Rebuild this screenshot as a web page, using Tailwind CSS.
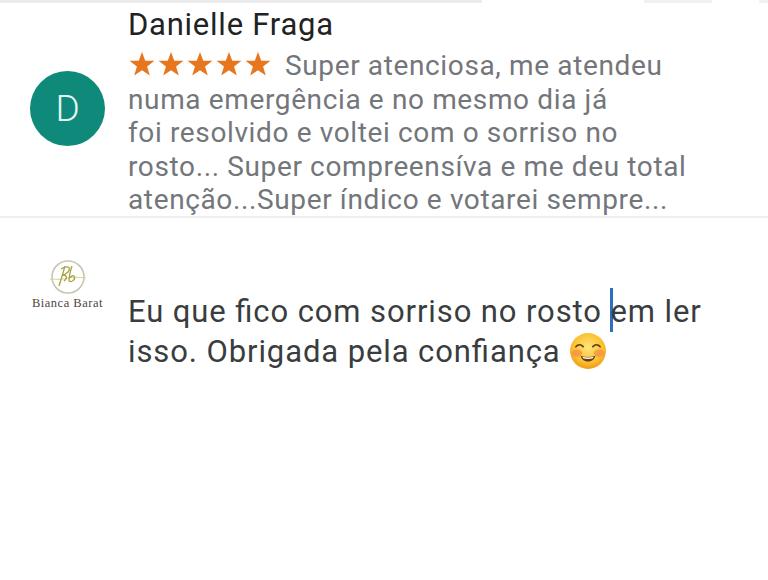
<!DOCTYPE html>
<html lang="pt-BR">
<head>
  <meta charset="UTF-8" />
  <title>Avaliação</title>
  <script src="https://cdn.jsdelivr.net/npm/@tailwindcss/browser@4"></script>
</head>
<body class="bg-white w-[768px] h-[580px] overflow-hidden font-['Roboto',sans-serif]">

  <!-- Top edge of the previous card -->
  <div class="flex h-[3px]">
    <div class="w-[482px] bg-[#ececec]"></div>
    <div class="w-[162px]"></div>
    <div class="w-[68px] bg-[#f1f1f1]"></div>
    <div class="w-[47px]"></div>
    <div class="flex-1 bg-[#f1f1f1]"></div>
  </div>

  <!-- Review -->
  <div class="flex h-[215px] border-b-2 border-[#efefef]">
    <div class="w-[128px] shrink-0 pl-[30px] pt-[68px]">
      <div class="w-[75px] h-[75px] rounded-full bg-[#0f8a7a] text-[#e6f6f3] flex items-center justify-center text-[37px] font-light">D</div>
    </div>
    <div class="flex-1">
      <h2 class="text-[31px] leading-[44px] tracking-[0.75px] text-[#222] font-normal">Danielle Fraga</h2>
      <p class="text-[28px] leading-[33.5px] text-[#73767a] mt-[2px] tracking-[0.63px]">
        <span class="inline-flex gap-[1px] align-[-2px] mr-[13px]">
          <svg class="w-[28px] h-[26px]" viewBox="0 0 24 24" fill="#e8761f"><path d="M12 1l3 8h8.500l-6.800 5.200 2.500 8.500L12 17.700l-7.200 5 2.500-8.500L.5 9H9z"/></svg>
          <svg class="w-[28px] h-[26px]" viewBox="0 0 24 24" fill="#e8761f"><path d="M12 1l3 8h8.500l-6.800 5.200 2.500 8.500L12 17.700l-7.200 5 2.500-8.500L.5 9H9z"/></svg>
          <svg class="w-[28px] h-[26px]" viewBox="0 0 24 24" fill="#e8761f"><path d="M12 1l3 8h8.500l-6.800 5.200 2.500 8.500L12 17.700l-7.200 5 2.500-8.500L.5 9H9z"/></svg>
          <svg class="w-[28px] h-[26px]" viewBox="0 0 24 24" fill="#e8761f"><path d="M12 1l3 8h8.500l-6.800 5.200 2.500 8.500L12 17.700l-7.200 5 2.500-8.500L.5 9H9z"/></svg>
          <svg class="w-[28px] h-[26px]" viewBox="0 0 24 24" fill="#e8761f"><path d="M12 1l3 8h8.500l-6.800 5.200 2.500 8.500L12 17.700l-7.200 5 2.500-8.500L.5 9H9z"/></svg>
        </span>Super atenciosa, me atendeu<br>numa emergência e no mesmo dia já<br>foi resolvido e voltei com o sorriso no<br>rosto... Super compreensíva e me deu total<br>atenção...Super índico e votarei sempre...
      </p>
    </div>
  </div>

  <!-- Reply -->
  <div class="flex">
    <div class="w-[128px] shrink-0 pl-[32px] pt-[40px]">
      <div class="w-[72px] flex flex-col items-center">
        <svg class="w-[40px] h-[38px]" viewBox="0 0 40 38" fill="none">
          <circle cx="20" cy="19" r="16" stroke="#c9c4b4" stroke-width="1.600"/>
          <path d="M2 21c8 1 13 0 18-1s11-1 18 0" stroke="#d8d68c" stroke-width="1"/>
          <path d="M17 8c-2 7-4 14-6 20M13 11c6-4 11-2 7 3-2 2-4 3-6 3 5 0 6 3 2 6M24 8c-2 6-3 11-3 15 3 2 7-2 5-5-1-1-3 0-4 2" stroke="#a9a24a" stroke-width="1.300"/>
        </svg>
        <span class="font-['Liberation_Serif',serif] text-[12.500px] leading-[13px] text-[#4f4440] whitespace-nowrap tracking-[0.5px] mt-[1px] self-start">Bianca Barat</span>
      </div>
    </div>
    <p class="pt-[70px] text-[31px] leading-[40px] text-[#3a3d40] tracking-[0.9px] [font-feature-settings:'liga']">
      Eu que fico com sorriso no rosto <span class="inline-block w-[3px] h-[44px] bg-[#2f6fc0] align-[-10px] -ml-[1px] -mr-[2px]"></span>em ler<br>isso. Obrigada pela confiança
      <svg class="inline-block w-[38px] h-[38px] -my-[8px] align-[0px]" viewBox="0 0 36 36">
        <defs>
          <radialGradient id="face" cx="50%" cy="40%" r="60%">
            <stop offset="0%" stop-color="#ffe57a"/>
            <stop offset="70%" stop-color="#fbc02d"/>
            <stop offset="100%" stop-color="#ee9a1c"/>
          </radialGradient>
        </defs>
        <circle cx="18" cy="18" r="17" fill="url(#face)"/>
        <ellipse cx="7.500" cy="20" rx="5" ry="3.500" fill="#f58a4a" opacity="0.700"/>
        <ellipse cx="28.500" cy="20" rx="5" ry="3.500" fill="#f58a4a" opacity="0.700"/>
        <path d="M6.500 14c2-2.500 5-2.500 7 0M22.500 14c2-2.500 5-2.500 7 0" fill="none" stroke="#5b3a1a" stroke-width="1.500" stroke-linecap="round"/>
        <path d="M11 22.500c4.500 1.500 9.500 1.500 14 0-1 4-4 5.500-7 5.500s-6-1.500-7-5.500z" fill="#6b3a16"/>
        <path d="M12.500 23.500c3.500.8 7.500.8 11 0-.4.8-.8 1.200-1.300 1.600-2.800.5-5.600.5-8.400 0-.5-.4-.9-.8-1.300-1.600z" fill="#fff"/>
      </svg>
    </p>
  </div>

</body>
</html>
